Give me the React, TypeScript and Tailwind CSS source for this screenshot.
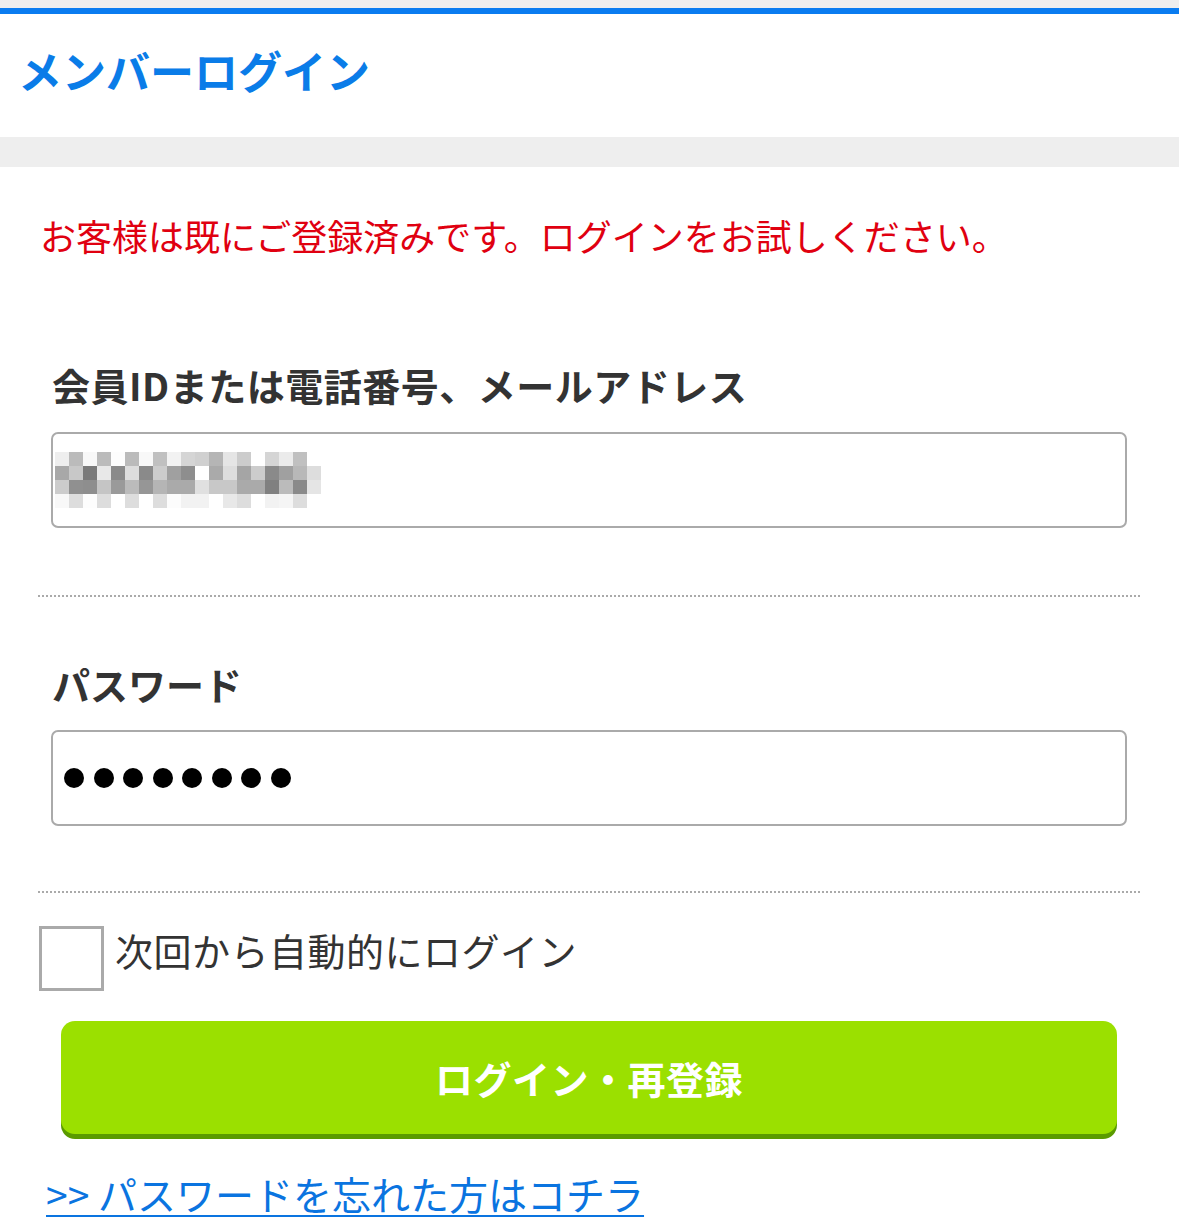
const blur = [
  ["#eeeeee", "#bbbbbb", "#f8f8f8", "#bbbbbb", "#fdfdfd", "#bbbbbb", "#f8f8f8", "#c0c0c0", "#f2f2f2", "#d5d5d5", "#d0d0d0", "#b5b5b5", "#e5e5e5", "#cccccc", "#ffffff", "#d5d5d5", "#ebebeb", "#c0c0c0", "#ffffff"],
  ["#a8a8a8", "#c8c8c8", "#7a7a7a", "#e8e8e8", "#8a8a8a", "#dddddd", "#8a8a8a", "#cccccc", "#a0a0a0", "#8e8e8e", "#ffffff", "#aaaaaa", "#dddddd", "#a5a5a5", "#cccccc", "#8a8a8a", "#a0a0a0", "#b8b8b8", "#dddddd"],
  ["#cccccc", "#909090", "#8e8e8e", "#c5c5c5", "#9a9a9a", "#bbbbbb", "#969696", "#b5b5b5", "#aaaaaa", "#aaaaaa", "#e0e0e0", "#c8c8c8", "#c8c8c8", "#aaaaaa", "#aaaaaa", "#808080", "#bbbbbb", "#8a8a8a", "#e5e5e5"],
  ["#f8f8f8", "#dddddd", "#fdfdfd", "#dddddd", "#ffffff", "#dddddd", "#ffffff", "#dddddd", "#fcfcfc", "#f2f2f2", "#f2f2f2", "#ffffff", "#e8e8e8", "#dddddd", "#ffffff", "#f2f2f2", "#f5f5f5", "#dddddd", "#ffffff"],
];

const font = { fontFamily: '"Noto Sans CJK JP", "Noto Sans", sans-serif' };

export default function App() {
  return (
    <div className="w-[1179px] min-h-[1228px] bg-white" style={font}>
      <div className="h-[8px] bg-[#eeeeee]" />
      <div className="h-[6px] bg-[#0a7cf0]" />
      <header className="h-[123px] flex items-center px-[18px] pb-[12px]">
        <h1 className="text-[44px] leading-none font-bold text-[#0a7ce8]">
          メンバーログイン
        </h1>
      </header>
      <div className="h-[30px] bg-[#eeeeee]" />

      <main className="mx-[38px] w-[1102px] flex flex-col">
        <p className="mt-[41px] ml-[2px] text-[36px] leading-[54px] text-[#e00010] whitespace-nowrap">
          お客様は既にご登録済みです。ログインをお試しください。
        </p>

        <label className="mt-[99px] ml-[14px] text-[38px] leading-[48px] font-bold text-[#333333] tracking-[0.5px]">
          会員IDまたは電話番号、メールアドレス
        </label>
        <div className="mt-[23px] mx-[13px] h-[96px] border-2 border-[#aaaaaa] rounded-[7px] flex items-center pl-[2px]">
          <div className="flex flex-col">
            {blur.map((row, r) => (
              <div key={r} className="flex">
                {row.map((c, i) => (
                  <div key={i} className="w-[14px] h-[14px]" style={{ backgroundColor: c }} />
                ))}
              </div>
            ))}
          </div>
        </div>

        <div className="mt-[67px] border-t-2 border-dotted border-[#aaaaaa]" />

        <label className="mt-[63px] ml-[14px] text-[38px] leading-[48px] font-bold text-[#333333]">
          パスワード
        </label>
        <div className="mt-[22px] mx-[13px] h-[96px] border-2 border-[#aaaaaa] rounded-[7px] flex items-center pl-[11px] gap-[9.5px]">
          {Array.from({ length: 8 }).map((_, i) => (
            <span key={i} className="w-[20px] h-[20px] rounded-full bg-black" />
          ))}
        </div>

        <div className="mt-[65px] border-t-2 border-dotted border-[#aaaaaa]" />

        <div className="mt-[33px] ml-[1px] flex items-start gap-[11px]">
          <span className="w-[65px] h-[65px] border-[3px] border-[#aaaaaa] bg-white" />
          <span className="text-[38px] leading-[48px] text-[#333333] tracking-[0.5px]">
            次回から自動的にログイン
          </span>
        </div>

        <button className="mt-[30px] mx-[23px] h-[113px] rounded-[14px] bg-[#9be000] shadow-[0_5px_0_#5a9a00] flex items-center justify-center text-white text-[38px] font-bold tracking-[0.5px]">
          ログイン・再登録
        </button>

        <a
          href="#"
          className="mt-[34px] ml-[8px] self-start text-[39px] leading-[50px] text-[#0a74e0] underline underline-offset-[5px] decoration-2 whitespace-nowrap"
        >
          &gt;&gt; パスワードを忘れた方はコチラ
        </a>
      </main>
    </div>
  );
}
